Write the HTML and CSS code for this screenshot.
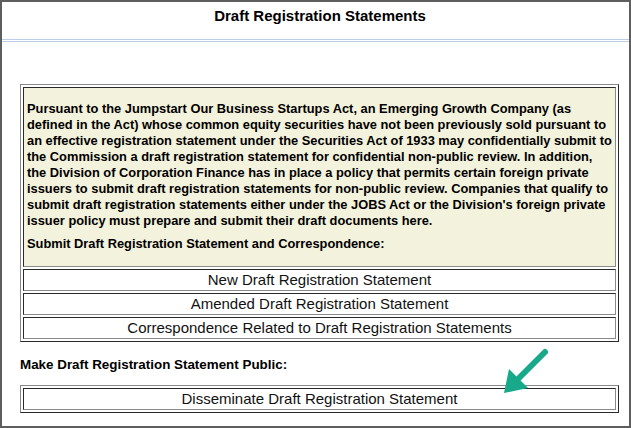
FILE: index.html
```html
<!DOCTYPE html>
<html>
<head>
<meta charset="utf-8">
<link rel="stylesheet" href="styles.css">
</head>
<body>
<div class="page">
  <div class="header">Draft Registration Statements</div>
  <div class="content">
    <table class="box">
      <tr>
        <td class="intro">
          <p class="para">Pursuant to the Jumpstart Our Business Startups Act, an Emerging Growth Company (as<br>
defined in the Act) whose common equity securities have not been previously sold pursuant to<br>
an effective registration statement under the Securities Act of 1933 may confidentially submit to<br>
the Commission a draft registration statement for confidential non-public review. In addition,<br>
the Division of Corporation Finance has in place a policy that permits certain foreign private<br>
issuers to submit draft registration statements for non-public review. Companies that qualify to<br>
submit draft registration statements either under the JOBS Act or the Division's foreign private<br>
issuer policy must prepare and submit their draft documents here.</p>
          <p class="sub">Submit Draft Registration Statement and Correspondence:</p>
        </td>
      </tr>
      <tr><td class="btn">New Draft Registration Statement</td></tr>
      <tr><td class="btn">Amended Draft Registration Statement</td></tr>
      <tr><td class="btn">Correspondence Related to Draft Registration Statements</td></tr>
    </table>
    <p class="label">Make Draft Registration Statement Public:</p>
    <table class="box">
      <tr><td class="btn">Disseminate Draft Registration Statement</td></tr>
    </table>
  </div>
  <svg class="arrow" width="60" height="55" viewBox="0 0 60 55">
    <line x1="50" y1="7" x2="19" y2="38" stroke="#17a98a" stroke-width="6" stroke-linecap="round"/>
    <polygon points="9,48 14,24 33,43" fill="#17a98a"/>
  </svg>
</div>
</body>
</html>
```

FILE: styles.css
```css
html, body {
  margin: 0;
  padding: 0;
  background: #ffffff;
}
.page {
  position: relative;
  width: 631px;
  height: 428px;
  box-sizing: border-box;
  border: 2px solid #5e5e5e;
  font-family: "Liberation Sans", Arial, sans-serif;
  color: #000;
}
.header {
  font-weight: bold;
  font-size: 15px;
  line-height: 16px;
  text-align: center;
  padding: 6px 0 15px 9px;
  border-bottom: 3px double #bccde6;
}
.content {
  padding: 42px 0 0 18px;
}
.box {
  width: 599px;
  border-collapse: separate;
  border-spacing: 2px;
  border: 1px solid;
  border-color: #8a8a8a #2a2a2a #2a2a2a #8a8a8a;
  table-layout: fixed;
}
.box td {
  border: 1px solid;
  border-color: #2a2a2a #8a8a8a #8a8a8a #2a2a2a;
  padding: 0;
}
.intro {
  background: #f3f2dc;
  padding: 13px 1px 14px 3px !important;
  font-weight: bold;
  font-size: 12.85px;
  line-height: 16px;
  white-space: nowrap;
}
.para {
  margin: 0;
}
.sub {
  margin: 7px 0 0;
}
.btn {
  height: 20px;
  font-size: 15px;
  line-height: 20px;
  text-align: center;
  color: #111;
}
.label {
  margin: 15px 0 12px 0;
  font-weight: bold;
  font-size: 13.4px;
  line-height: 16px;
}
.arrow {
  position: absolute;
  left: 493px;
  top: 343px;
}
```
